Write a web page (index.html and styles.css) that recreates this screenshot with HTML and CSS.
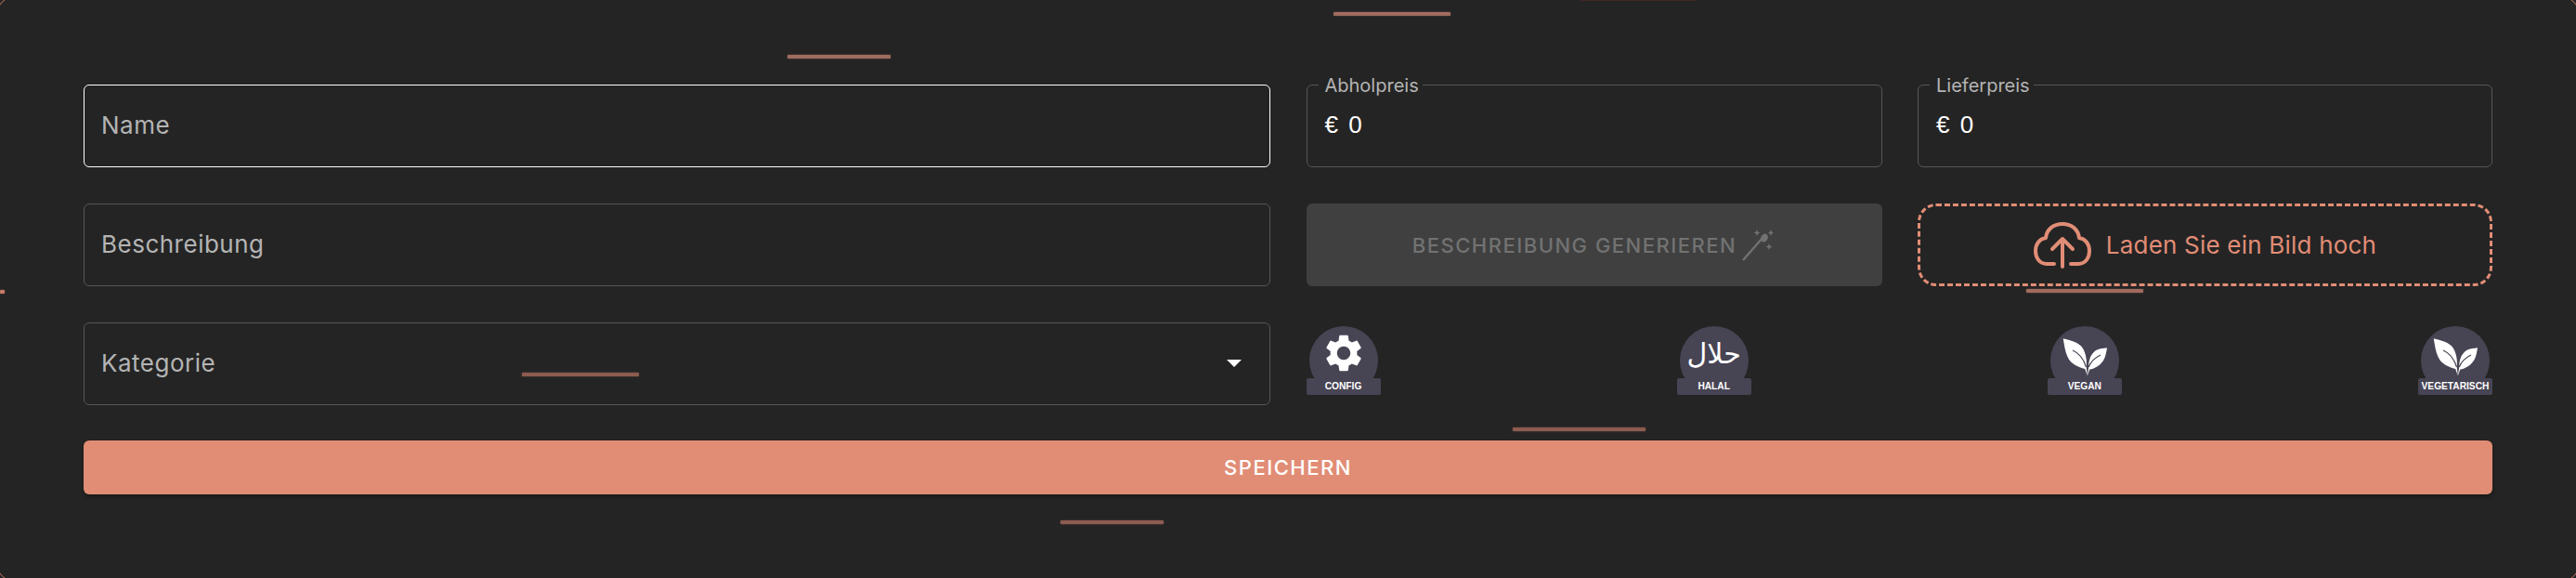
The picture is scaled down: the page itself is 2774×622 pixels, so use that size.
FILE: index.html
```html
<!DOCTYPE html>
<html lang="de">
<head>
  <meta charset="UTF-8">
  <meta name="viewport" content="width=device-width, initial-scale=1.0">
  <title>Produkt bearbeiten</title>
  <link rel="stylesheet" href="styles.css">
</head>
<body>
<div class="page">
  <div class="frame"></div>

  <span class="streak streak-top"></span>
  <span class="streak streak-top-dim"></span>
  <span class="streak streak-name"></span>
  <span class="streak streak-edge"></span>
  <span class="streak streak-category"></span>
  <span class="streak streak-upload"></span>
  <span class="streak streak-badges"></span>
  <span class="streak streak-bottom"></span>

  <form class="form-grid">
    <input class="field field-focus" type="text" placeholder="Name">

    <div class="price">
      <label class="price-label">Abholpreis</label>
      <span class="price-value">€ 0</span>
    </div>
    <div class="price">
      <label class="price-label">Lieferpreis</label>
      <span class="price-value">€ 0</span>
    </div>

    <input class="field" type="text" placeholder="Beschreibung">

    <button class="generate" type="button" disabled>
      BESCHREIBUNG GENERIEREN
      <svg class="wand" viewBox="0 0 34 34" width="34" height="34">
        <path d="M1 33 L22 9" stroke="#727272" stroke-width="2.4" fill="none"/>
        <ellipse cx="24" cy="9" rx="3.6" ry="4.6" transform="rotate(25 24 9)" fill="#727272"/>
        <path d="M16 0 l1 2.5 2.5 1 -2.5 1 -1 2.5 -1 -2.5 -2.5 -1 2.5 -1z M31 0 l1 2.5 2 1 -2 1 -1 2.5 -1 -2.5 -2 -1 2 -1z M29 15 l1 2.5 2.5 1 -2.5 1 -1 2.5 -1 -2.5 -2.5 -1 2.5 -1z" fill="#727272"/>
      </svg>
    </button>

    <button class="upload" type="button">
      <svg class="cloud" viewBox="0 0 62 50" width="62" height="50" fill="none" stroke="#e18d76" stroke-width="4" stroke-linecap="round" stroke-linejoin="round">
        <path d="M22 45 H14 C6 45 2 38 2 31 C2 24 6 18 13 17 C14 8 21 2 31 2 C41 2 48 8 49 17 C56 18 60 24 60 31 C60 38 56 45 48 45 H40"/>
        <path d="M31 48 V18 M20 29 L31 18 L42 29"/>
      </svg>
      Laden Sie ein Bild hoch
    </button>

    <div class="field select">
      <span>Kategorie</span>
      <span class="arrow"></span>
    </div>

    <div class="badges">
      <div class="badge">
        <div class="badge-circle">
          <svg class="gear" viewBox="0 0 24 24" width="48" height="48">
            <path fill="#fff" fill-rule="evenodd" d="M19.14 12.94c.04-.3.06-.61.06-.94 0-.32-.02-.64-.07-.94l2.03-1.58c.18-.14.23-.41.12-.61l-1.92-3.32c-.12-.22-.37-.29-.59-.22l-2.39.96c-.5-.38-1.03-.7-1.62-.94l-.36-2.54c-.04-.24-.24-.41-.48-.41h-3.84c-.24 0-.43.17-.47.41l-.36 2.54c-.59.24-1.13.57-1.62.94l-2.39-.96c-.22-.08-.47 0-.59.22L2.74 8.87c-.12.21-.08.47.12.61l2.03 1.58c-.05.3-.09.63-.09.94s.02.64.07.94l-2.03 1.58c-.18.14-.23.41-.12.61l1.92 3.32c.12.22.37.29.59.22l2.39-.96c.5.38 1.03.7 1.62.94l.36 2.54c.05.24.24.41.48.41h3.84c.24 0 .44-.17.47-.41l.36-2.54c.59-.24 1.13-.56 1.62-.94l2.39.96c.22.08.47 0 .59-.22l1.92-3.32c.12-.22.07-.47-.12-.61l-2.01-1.58zM12 15.6c-1.98 0-3.6-1.62-3.6-3.6s1.62-3.6 3.6-3.6 3.6 1.62 3.6 3.6-1.62 3.6-3.6 3.6z"/>
          </svg>
        </div>
        <div class="badge-label">CONFIG</div>
      </div>
      <div class="badge">
        <div class="badge-circle">
          <span class="halal" lang="ar" dir="rtl">حلال</span>
        </div>
        <div class="badge-label">HALAL</div>
      </div>
      <div class="badge">
        <div class="badge-circle">
          <svg class="leaf" viewBox="0 0 74 74" width="74" height="74">
            <path fill="#fff" d="M13.7 13.3 C21 15.5 31 17 35 24 C38.5 30 39.5 38 38.7 44 L39.8 53.5 L41.2 44 C41 38 43 30 49 26 C53 24 57 24 61 23.3 C60 29 59.5 33 57 37 C53 43 47 46 42.3 46.5 L39.8 53.5 L37.2 46 C30 44 22 41 18.5 33 C15.5 27 15 20 13.7 13.3Z"/>
            <path fill="none" stroke="#474454" stroke-width="1.2" d="M24 26 C31 29 36 36 38.5 44 M54 31 C48 34 43 39 41.2 44"/>
          </svg>
        </div>
        <div class="badge-label">VEGAN</div>
      </div>
      <div class="badge">
        <div class="badge-circle">
          <svg class="leaf" viewBox="0 0 74 74" width="74" height="74">
            <path fill="#fff" d="M13.7 13.3 C21 15.5 31 17 35 24 C38.5 30 39.5 38 38.7 44 L39.8 53.5 L41.2 44 C41 38 43 30 49 26 C53 24 57 24 61 23.3 C60 29 59.5 33 57 37 C53 43 47 46 42.3 46.5 L39.8 53.5 L37.2 46 C30 44 22 41 18.5 33 C15.5 27 15 20 13.7 13.3Z"/>
            <path fill="none" stroke="#474454" stroke-width="1.2" d="M24 26 C31 29 36 36 38.5 44 M54 31 C48 34 43 39 41.2 44"/>
          </svg>
        </div>
        <div class="badge-label">VEGETARISCH</div>
      </div>
    </div>
  </form>

  <button class="save" type="button">SPEICHERN</button>
</div>
</body>
</html>
```
FILE: styles.css
```css
* {
  box-sizing: border-box;
}
body {
  margin: 0;
  background-color: #242424;
  font-family: Inter, 'Noto Sans', sans-serif;
  overflow: hidden;
}
.page {
  position: relative;
  height: 622px;
  padding: 91px 90px 0;
  overflow: hidden;
}
.frame {
  position: absolute;
  inset: -4px;
  border: 1.5px solid #c67c68;
  border-radius: 20px;
}

.streak {
  position: absolute;
  height: 4px;
  background-color: #a06c5f;
  border-radius: 1px;
  box-shadow: 0 0 2px rgba(160, 108, 95, 0.6);
}
.streak-top { left: 1436px; top: 13px; width: 126px; }
.streak-top-dim { left: 1702px; top: 0; width: 125px; height: 1px; background-color: #3e2825; box-shadow: none; }
.streak-name { left: 848px; top: 59px; width: 111px; }
.streak-edge { left: 0; top: 312px; width: 5px; background-color: #c67c68; }
.streak-category { left: 562px; top: 401px; width: 126px; background-color: #8c5c50; }
.streak-upload { left: 2182px; top: 311px; width: 126px; }
.streak-badges { left: 1629px; top: 460px; width: 143px; background-color: #8c5c50; }
.streak-bottom { left: 1142px; top: 560px; width: 111px; background-color: #8c5c50; }

.form-grid {
  display: grid;
  grid-template-columns: 1278px 620px 619px;
  grid-auto-rows: 89px;
  gap: 39px 38.5px;
}
.field {
  width: 100%;
  height: 89px;
  padding: 0 18px 2px;
  background: transparent;
  border: 1px solid #565656;
  border-radius: 6px;
  color: #b4b4b4;
  font-family: inherit;
  font-size: 26px;
  letter-spacing: 0.5px;
  outline: none;
}
.field::placeholder {
  color: #b4b4b4;
  opacity: 1;
}
.field-focus {
  border-color: #ffffff;
}
.select {
  display: flex;
  align-items: center;
  justify-content: space-between;
}
.arrow {
  width: 0;
  height: 0;
  margin-right: 12px;
  border-left: 8px solid transparent;
  border-right: 8px solid transparent;
  border-top: 8px solid #ffffff;
}

.price {
  position: relative;
  display: flex;
  align-items: center;
  padding: 0 19px 2px;
  border: 1px solid #565656;
  border-radius: 6px;
}
.price-label {
  position: absolute;
  left: 12px;
  top: -12px;
  padding: 0 4px 0 7px;
  background-color: #242424;
  color: #b4b4b4;
  font-size: 20px;
  line-height: 24px;
}
.price-value {
  color: #ffffff;
  font-family: 'Liberation Sans', Arial, sans-serif;
  font-size: 26px;
  word-spacing: 4px;
}

.generate {
  display: flex;
  align-items: center;
  justify-content: center;
  gap: 6px;
  padding-left: 4px;
  background-color: #404040;
  border: none;
  border-radius: 6px;
  color: #727272;
  font-family: inherit;
  font-size: 22px;
  font-weight: 500;
  letter-spacing: 1.5px;
}
.upload {
  display: flex;
  align-items: center;
  justify-content: center;
  gap: 16px;
  background: transparent;
  border: 3px dashed #e18d76;
  border-radius: 20px;
  color: #e18d76;
  font-family: inherit;
  font-size: 26px;
  letter-spacing: 0.2px;
}

.badges {
  grid-column: span 2;
  display: flex;
  justify-content: space-between;
  align-items: flex-start;
  padding-top: 4px;
}
.badge {
  position: relative;
  width: 80px;
  height: 74px;
}
.badge-circle {
  display: flex;
  align-items: center;
  justify-content: center;
  width: 74px;
  height: 74px;
  margin: 0 auto;
  background-color: #474454;
  border-radius: 50%;
}
.gear {
  margin-top: -16px;
}
.badge-label {
  position: absolute;
  left: 0;
  bottom: 0;
  width: 80px;
  height: 18px;
  background-color: #474454;
  border-radius: 2px;
  color: #ffffff;
  font-family: 'Liberation Sans', Arial, sans-serif;
  font-size: 10.2px;
  font-weight: bold;
  line-height: 18px;
  text-align: center;
}
.halal {
  margin-top: -14px;
  color: #ffffff;
  font-family: 'DejaVu Sans', sans-serif;
  font-size: 30px;
  line-height: 1;
}

.save {
  display: block;
  width: 100%;
  height: 58px;
  margin-top: 38px;
  background-color: #e18d76;
  border: none;
  border-radius: 6px;
  box-shadow: 0 3px 4px rgba(0, 0, 0, 0.3);
  color: #ffffff;
  font-family: inherit;
  font-size: 22px;
  font-weight: 500;
  letter-spacing: 1.5px;
}
```
